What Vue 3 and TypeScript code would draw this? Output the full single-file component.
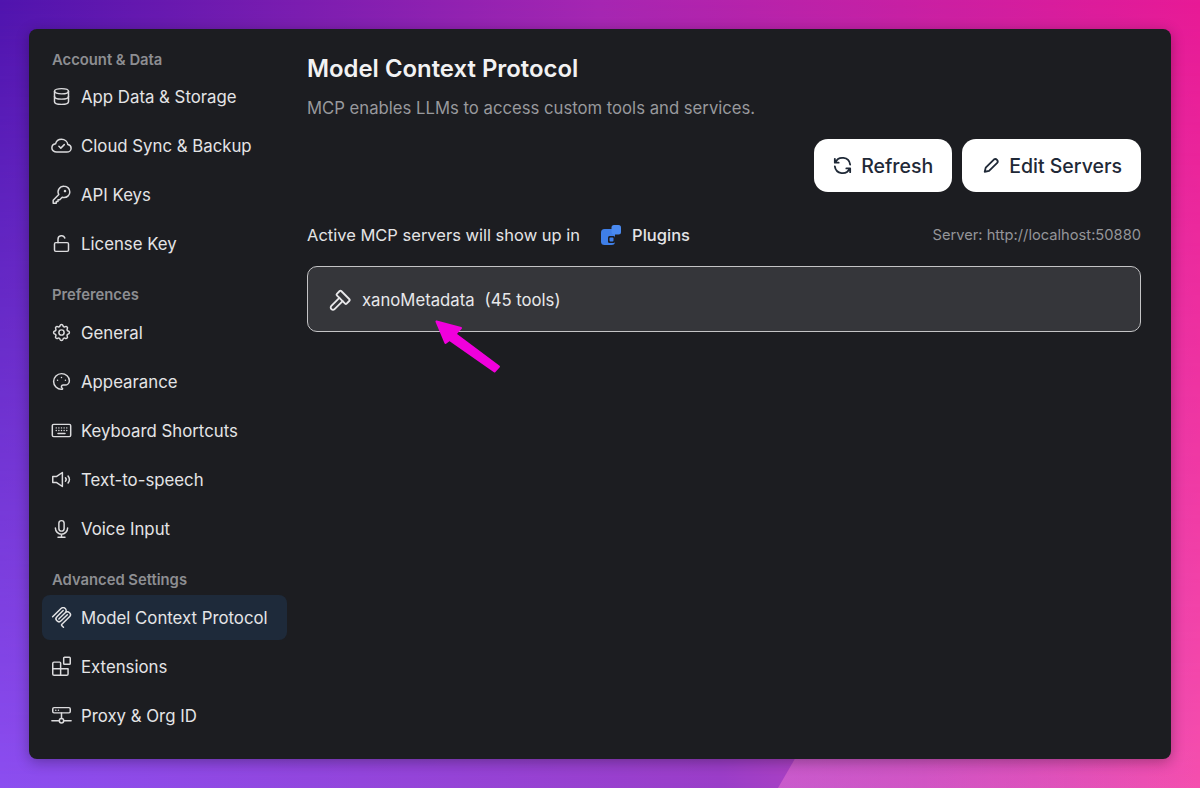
<template>
  <div class="page">
    <div class="backdrop"></div>
    <div class="wedge"></div>
    <div class="window">
      <aside class="sidebar">
        <section v-for="group in groups" :key="group.title" class="group">
          <h4>{{ group.title }}</h4>
          <a
            v-for="item in group.items"
            :key="item.label"
            class="nav-item"
            :class="{ active: item.label === activeItem }"
          >
            <svg class="nav-icon" :class="{ filled: item.filled }" viewBox="0 0 24 24">
              <path v-for="d in item.icon" :key="d" :d="d" />
            </svg>
            <span>{{ item.label }}</span>
          </a>
        </section>
      </aside>

      <main class="content">
        <h1>Model Context Protocol</h1>
        <p class="subtitle">MCP enables LLMs to access custom tools and services.</p>

        <div class="actions">
          <button type="button">
            <svg viewBox="0 0 24 24">
              <path d="M20 11A8.1 8.1 0 0 0 4.5 9M4 5v4h4" />
              <path d="M4 13a8.1 8.1 0 0 0 15.5 2m.5 4v-4h-4" />
            </svg>
            Refresh
          </button>
          <button type="button">
            <svg viewBox="0 0 24 24">
              <path d="M6 18.500l1-4.300L15.500 5.800a2.500 2.500 0 0 1 3.500 3.500L10.500 17.700z" />
            </svg>
            Edit Servers
          </button>
        </div>

        <div class="status-row">
          <div class="status-text">
            <span>Active MCP servers will show up in</span>
            <svg class="plugins-icon" viewBox="0 0 20 20">
              <rect x="0" y="4" width="14" height="16" rx="3.500" fill="#3f7fe8" />
              <rect x="10.500" y="0" width="9.500" height="9.500" rx="2.500" fill="#4a8af0" />
              <rect x="7" y="11" width="7" height="7" rx="1.500" fill="#1c1d21" />
              <rect x="8.500" y="12.500" width="4" height="4" rx="1" fill="#3f7fe8" />
            </svg>
            <strong>Plugins</strong>
          </div>
          <span class="server-url">Server: http://localhost:50880</span>
        </div>

        <div class="server-card">
          <svg viewBox="0 0 24 24">
            <path d="M11.414 10l-7.383 7.418a2.091 2.091 0 0 0 0 2.967 2.110 2.110 0 0 0 2.976 0l7.407-7.385" />
            <path d="M18.121 15.293l2.586-2.586a1 1 0 0 0 0-1.414l-7.586-7.586a1 1 0 0 0-1.414 0l-2.586 2.586a1 1 0 0 0 0 1.414l7.586 7.586a1 1 0 0 0 1.414 0z" />
          </svg>
          <span>xanoMetadata</span>
          <span>(45 tools)</span>
        </div>

        <svg class="arrow" viewBox="0 0 70 56">
          <path
            d="M2.500 1.500L27 8 21.500 14 65 46.500 60.500 51.500 15.500 20 11.500 23z"
            fill="#f000dc"
            stroke="#f000dc"
            stroke-width="2"
            stroke-linejoin="round"
          />
        </svg>
      </main>
    </div>
  </div>
</template>

<script setup lang="ts">
interface NavItem {
  label: string;
  icon: string[];
  filled?: boolean;
}

interface NavGroup {
  title: string;
  items: NavItem[];
}

const activeItem = 'Model Context Protocol';

const groups: NavGroup[] = [
  {
    title: 'Account & Data',
    items: [
      {
        label: 'App Data & Storage',
        icon: [
          'M4 6c0-1.700 3.600-3 8-3s8 1.300 8 3-3.600 3-8 3-8-1.300-8-3z',
          'M4 6v12c0 1.700 3.600 3 8 3s8-1.300 8-3V6',
          'M4 12c0 1.700 3.600 3 8 3s8-1.300 8-3',
        ],
      },
      {
        label: 'Cloud Sync & Backup',
        icon: [
          'M6.500 19.500C3.500 19.500 1 17.500 1 14.800c0-2.400 1.800-4.300 4.200-4.700C6 6.800 8.800 4.800 12 4.800c3.800 0 6.800 2.600 7.200 6 2.200.4 3.800 2.200 3.800 4.200 0 2.500-2.200 4.500-5 4.500z',
          'M9 12.800l2.200 2.200 4-4',
        ],
      },
      {
        label: 'API Keys',
        icon: [
          'M15 2.500a6.500 6.500 0 0 1 0 13c-.8 0-1.500-.1-2.200-.4L10 18H8v2H6v2H2.500v-3.500l6.400-6.400A6.500 6.500 0 0 1 15 2.500z',
          'M16 7.500a.6.6 0 1 0 .01 0',
        ],
      },
      {
        label: 'License Key',
        icon: [
          'M5.500 11h13A1.500 1.500 0 0 1 20 12.500v7a1.500 1.500 0 0 1-1.500 1.500h-13A1.500 1.500 0 0 1 4 19.500v-7A1.500 1.500 0 0 1 5.500 11z',
          'M8 11V7a4 4 0 0 1 7.800-1.200',
        ],
      },
    ],
  },
  {
    title: 'Preferences',
    items: [
      {
        label: 'General',
        icon: [
          'M10.300 4.300c.4-1.800 3-1.800 3.400 0a1.700 1.700 0 0 0 2.600 1.100c1.500-.9 3.300.8 2.300 2.300a1.700 1.700 0 0 0 1.100 2.600c1.800.4 1.800 3 0 3.400a1.700 1.700 0 0 0-1.100 2.600c.9 1.500-.8 3.300-2.300 2.300a1.700 1.700 0 0 0-2.600 1.100c-.4 1.800-3 1.800-3.400 0a1.700 1.700 0 0 0-2.600-1.100c-1.500.9-3.300-.8-2.300-2.300a1.700 1.700 0 0 0-1.100-2.600c-1.800-.4-1.800-3 0-3.400a1.700 1.700 0 0 0 1.100-2.600c-.9-1.500.8-3.300 2.300-2.300a1.700 1.700 0 0 0 2.600-1.100z',
          'M9 12a3 3 0 1 0 6 0 3 3 0 1 0-6 0z',
        ],
      },
      {
        label: 'Appearance',
        icon: [
          'M12 21a9 9 0 1 1 0-18c5 0 9 3.600 9 8a5 5 0 0 1-5 5h-2a2 2 0 0 0-1 3.800c.6.700.2 1.200-1 1.200z',
          'M7.500 10.500h.01M12 7.500h.01M16.500 10.500h.01',
        ],
      },
      {
        label: 'Keyboard Shortcuts',
        icon: [
          'M3 5h18a1.500 1.500 0 0 1 1.500 1.500v11A1.500 1.500 0 0 1 21 19H3a1.500 1.500 0 0 1-1.500-1.500v-11A1.500 1.500 0 0 1 3 5z',
          'M6 9h.01M9 9h.01M12 9h.01M15 9h.01M18 9h.01M6 12h.01M9 12h.01M12 12h.01M15 12h.01M18 12h.01M8 15.500h8',
        ],
      },
      {
        label: 'Text-to-speech',
        icon: [
          'M2 8.500h4.500L13 4v16l-6.500-4.500H2z',
          'M16.500 10a3 3 0 0 1 0 4M19.500 8a6.500 6.500 0 0 1 0 8',
        ],
      },
      {
        label: 'Voice Input',
        icon: [
          'M9 6a3 3 0 0 1 6 0v6a3 3 0 0 1-6 0z',
          'M5 11.500a7 7 0 0 0 14 0M12 18.500V22M8 22h8',
        ],
      },
    ],
  },
  {
    title: 'Advanced Settings',
    items: [
      {
        label: activeItem,
        filled: true,
        icon: [
          'M15.688 2.343a2.588 2.588 0 00-3.61 0l-9.626 9.44a.863.863 0 01-1.203 0 .823.823 0 010-1.18l9.626-9.44a4.313 4.313 0 016.016 0 4.116 4.116 0 011.204 3.54 4.3 4.3 0 013.609 1.18l.05.05a4.115 4.115 0 010 5.9l-8.706 8.537a.274.274 0 000 .393l1.788 1.754a.823.823 0 010 1.18.863.863 0 01-1.203 0l-1.788-1.753a1.92 1.92 0 010-2.754l8.706-8.538a2.47 2.47 0 000-3.54l-.05-.049a2.588 2.588 0 00-3.607-.003l-7.172 7.034-.002.002-.098.097a.863.863 0 01-1.204 0 .823.823 0 010-1.18l7.273-7.133a2.47 2.47 0 00-.003-3.537z',
          'M14.485 4.703a.823.823 0 000-1.18.863.863 0 00-1.204 0l-7.119 6.982a4.115 4.115 0 000 5.9 4.314 4.314 0 006.016 0l7.12-6.982a.823.823 0 000-1.18.863.863 0 00-1.204 0l-7.119 6.982a2.588 2.588 0 01-3.61 0 2.47 2.47 0 010-3.54l7.12-6.982z',
        ],
      },
      {
        label: 'Extensions',
        icon: [
          'M3.500 7H10a1 1 0 0 1 1 1v14H3.500A1.500 1.500 0 0 1 2 20.500v-12A1.500 1.500 0 0 1 3.500 7z',
          'M2 14.500h17.500M11 14.500h8.500v6a1.500 1.500 0 0 1-1.500 1.500h-7',
          'M15.500 1.500H21a1 1 0 0 1 1 1v6a1 1 0 0 1-1 1h-5.500a1 1 0 0 1-1-1v-6a1 1 0 0 1 1-1z',
        ],
      },
      {
        label: 'Proxy & Org ID',
        icon: [
          'M3.500 3h17A1.500 1.500 0 0 1 22 4.500v3A1.500 1.500 0 0 1 20.500 9h-17A1.500 1.500 0 0 1 2 7.500v-3A1.500 1.500 0 0 1 3.500 3z',
          'M5.500 6h.01M8.500 6h.01',
          'M12 9v6.500M1 18h8.500M14.500 18H23',
          'M9.500 18a2.500 2.500 0 1 0 5 0 2.500 2.500 0 1 0-5 0z',
        ],
      },
    ],
  },
];
</script>

<style>
html,
body {
  margin: 0;
}
</style>

<style scoped>
.page {
  position: relative;
  box-sizing: border-box;
  height: 788px;
  padding: 29px;
  overflow: hidden;
  background: linear-gradient(90deg, #5014ae 0%, #a626b2 50%, #e81a96 100%);
  font-family: Inter, "Liberation Sans", sans-serif;
}

.backdrop {
  position: absolute;
  inset: 0;
  background: linear-gradient(90deg, #8c4ef0 0%, #9a3ec8 60%, #f54fae 100%);
  mask-image: linear-gradient(180deg, transparent 0%, #000 100%);
}

.wedge {
  position: absolute;
  inset: 0;
  background: linear-gradient(90deg, rgba(255, 130, 215, 0.4) 65%, rgba(255, 130, 215, 0) 100%);
  clip-path: polygon(800px 750px, 1200px 750px, 1200px 788px, 778px 788px);
}

.window {
  position: relative;
  display: flex;
  height: 730px;
  border-radius: 8px;
  background: #1c1d21;
  box-shadow: 0 3px 14px rgba(0, 0, 0, 0.3);
}

.sidebar {
  box-sizing: border-box;
  width: 278px;
  flex: none;
  padding: 22px 0 0 13px;
}

.group {
  margin-bottom: 20px;
}

.group h4 {
  margin: 0 0 6px 10px;
  color: #8d8e92;
  font-size: 14.800px;
  font-weight: 600;
  line-height: 18px;
}

.group:first-child h4 {
  margin-bottom: 5px;
}

.nav-item {
  display: flex;
  align-items: center;
  gap: 9px;
  width: 245px;
  height: 45px;
  margin-bottom: 4px;
  padding-left: 9px;
  box-sizing: border-box;
  border-radius: 8px;
  color: #e4e4e6;
  font-size: 16.800px;
  line-height: 24px;
}

.nav-item.active {
  background: #1e2a3a;
}

.nav-icon {
  width: 21px;
  height: 21px;
  flex: none;
  fill: none;
  stroke: #dcdcde;
  stroke-width: 1.700;
  stroke-linecap: round;
  stroke-linejoin: round;
}

.nav-icon.filled {
  fill: #e4e4e6;
  stroke: none;
}

.content {
  position: relative;
  flex: 1;
  padding: 23px 30px 0 0;
  min-width: 0;
}

h1 {
  margin: 0;
  color: #f2f2f3;
  font-size: 23.900px;
  font-weight: 600;
  line-height: 34px;
}

.subtitle {
  margin: 10px 0 0;
  color: #98999d;
  font-size: 16.700px;
  line-height: 24px;
}

.actions {
  display: flex;
  justify-content: flex-end;
  gap: 10px;
  margin-top: 19px;
}

.actions button {
  display: flex;
  align-items: center;
  gap: 7px;
  height: 53px;
  padding: 0 19px 0 17px;
  border: 0;
  border-radius: 14px;
  background: #fff;
  color: #1f2937;
  font: 500 19.500px Inter, "Liberation Sans", sans-serif;
}

.actions svg {
  width: 23px;
  height: 23px;
  fill: none;
  stroke: #1f2937;
  stroke-width: 1.900;
  stroke-linecap: round;
  stroke-linejoin: round;
}

.status-row {
  display: flex;
  align-items: center;
  justify-content: space-between;
  height: 24px;
  margin-top: 31px;
}

.status-text {
  display: flex;
  align-items: center;
  color: #e4e4e6;
  font-size: 16.500px;
}

.plugins-icon {
  width: 20px;
  height: 20px;
  margin: 0 11px 0 21px;
}

.status-text strong {
  font-weight: 500;
}

.server-url {
  color: #949599;
  font-size: 14.700px;
}

.server-card {
  display: flex;
  align-items: center;
  gap: 10px;
  box-sizing: border-box;
  height: 66px;
  margin-top: 19px;
  padding: 1px 0 0 19px;
  border: 1px solid #c4c4c6;
  border-radius: 10px;
  background: #35363a;
  color: #e8e8ea;
  font-size: 16.700px;
}

.server-card svg {
  width: 26px;
  height: 26px;
  margin-right: -1px;
  fill: none;
  stroke: #e8e8ea;
  stroke-width: 1.700;
  stroke-linecap: round;
  stroke-linejoin: round;
}

.arrow {
  position: absolute;
  left: 127px;
  top: 291px;
  width: 70px;
  height: 56px;
}
</style>
